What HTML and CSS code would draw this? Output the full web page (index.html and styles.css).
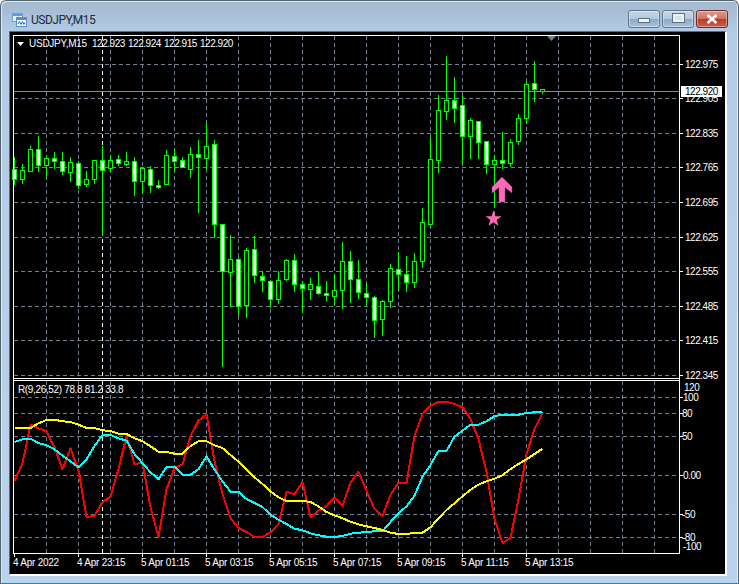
FILE: index.html
```html
<!DOCTYPE html>
<html lang="en">
<head>
    <meta charset="UTF-8">
    <meta name="viewport" content="width=device-width, initial-scale=1.0">
    <title>USDJPY,M15</title>
    <link rel="stylesheet" href="styles.css">
</head>
<body>

<div class="window">
    <div class="titlebar">
        <svg class="app-icon" width="15" height="14" viewBox="0 0 15 14">
            <rect x="0.5" y="0.5" width="10" height="8" fill="#e8f2fb" stroke="#6f9fd0"/>
            <rect x="1" y="1" width="9" height="2" fill="#5f9ad8"/>
            <rect x="4.5" y="4.5" width="10" height="9" fill="#f4f9fe" stroke="#5a8fc8"/>
            <rect x="5" y="5" width="9" height="2" fill="#4f8fd6"/>
            <path d="M6 11 L7.5 8.5 L9 11.5 L10.5 8.5 L12 11.5 L13 9.5" fill="none" stroke="#3a70b0"/>
        </svg>
        <span class="title">USDJPY,M15</span>
        <div class="controls">
            <div class="ctl"><span class="glyph-min"></span></div>
            <div class="ctl"><span class="glyph-max"></span></div>
            <div class="ctl ctl-close">
                <svg width="12" height="10" viewBox="0 0 12 10">
                    <path d="M1.5 1 L10.5 9 M10.5 1 L1.5 9" stroke="#fff" stroke-width="2.6" fill="none"/>
                </svg>
            </div>
        </div>
    </div>
    <div class="client">
        <svg id="chart" class="chart" width="715" height="542" viewBox="10 32 715 542"></svg>
    </div>
</div>

<script src="chart.js"></script>

</body>
</html>
```

FILE: styles.css
```css
body {
    margin: 0;
    background: #ffffff;
    overflow: hidden;
}

.window {
    box-sizing: border-box;
    width: 739px;
    height: 584px;
    display: flex;
    flex-direction: column;
    padding: 0 11px 7px 8px;
    border: 1px solid #56646f;
    border-bottom-color: #1f8aa0;
    border-radius: 6px 6px 0 0;
    background: linear-gradient(180deg, #a3b8cd 0%, #b4cde6 6%, #b9d3ec 100%);
    box-shadow: inset 1px 1px 0 #dfe8f0, inset -1px 0 0 #e4eef7;
}

.titlebar {
    height: 30px;
    flex: none;
    display: flex;
    align-items: center;
    font-family: "Roboto", "Liberation Sans", sans-serif;
}

.app-icon {
    margin: 7px 4px 0 3px;
}

.title {
    font-size: 12px;
    letter-spacing: -0.5px;
    color: #1c2a3a;
    margin-top: 7px;
}

.controls {
    margin-left: auto;
    margin-right: -1px;
    margin-top: 6px;
    display: flex;
    gap: 2px;
}

.ctl {
    box-sizing: border-box;
    width: 32px;
    height: 18px;
    display: flex;
    align-items: center;
    justify-content: center;
    border: 1px solid #5f7488;
    border-radius: 3px;
    background: linear-gradient(180deg, #c5d6e6 0%, #b4c9dd 48%, #8ba8c4 52%, #a9c3da 100%);
    box-shadow: inset 0 0 0 1px rgba(255, 255, 255, 0.4);
}

.ctl-close {
    border-color: #6a2a2a;
    background: linear-gradient(180deg, #dd9a8e 0%, #cf6f60 48%, #b83a28 52%, #c9604c 100%);
}

.glyph-min {
    width: 10px;
    height: 3px;
    margin-top: 3px;
    background: #eef3f8;
    border: 1px solid #5d7185;
}

.glyph-max {
    box-sizing: border-box;
    width: 11px;
    height: 8px;
    margin-bottom: 2px;
    background: #d7e2ec;
    border: 2px solid #eef3f8;
    outline: 1px solid #5d7185;
}

.client {
    flex: none;
    border-top: 1px solid #5b6a75;
    border-left: 1px solid #5b6a75;
    border-right: 2px solid #ffffff;
    border-bottom: 2px solid #ffffff;
    background: #000000;
    line-height: 0;
}

.chart {
    display: block;
    background: #000000;
    font-family: "Liberation Sans", "Arial", sans-serif;
    font-size: 10px;
}

.chart text {
    fill: #ffffff;
    letter-spacing: -0.25px;
    dominant-baseline: central;
}

.chart text.num {
    letter-spacing: -0.47px;
}

.chart text.indicator {
    letter-spacing: -0.35px;
}

.chart text.last-price {
    fill: #000000;
    letter-spacing: -0.47px;
}

.grid-line {
    stroke: #708090;
    stroke-width: 1;
    stroke-dasharray: 4 3;
    shape-rendering: crispEdges;
}

.separator {
    stroke: #ffffff;
    stroke-width: 1;
    stroke-dasharray: 4 3;
    shape-rendering: crispEdges;
}

.price-line {
    stroke: #808a96;
    stroke-width: 1;
    shape-rendering: crispEdges;
}

.frame {
    fill: #ffffff;
    shape-rendering: crispEdges;
}

.green {
    fill: #00ff00;
    shape-rendering: crispEdges;
}

.body-up {
    fill: #000000;
    shape-rendering: crispEdges;
}

.body-down {
    fill: #ffffff;
    shape-rendering: crispEdges;
}

.series {
    fill: none;
    stroke-width: 2;
    stroke-linejoin: round;
    shape-rendering: crispEdges;
}

.series-red { stroke: #ff0000; }
.series-cyan { stroke: #00ffff; }
.series-yellow { stroke: #ffff00; }

.marker {
    fill: #ff69b4;
}

.marker-edge {
    stroke: #7a58b8;
    stroke-width: 0.4;
}

.shift-mark {
    fill: #708090;
}

.label-box {
    fill: #ffffff;
    shape-rendering: crispEdges;
}
```

FILE: chart.js
```js
const svg = document.getElementById('chart');
const NS = 'http://www.w3.org/2000/svg';

function add(tag, attrs, text) {
    const el = document.createElementNS(NS, tag);
    for (const k in attrs) el.setAttribute(k, attrs[k]);
    if (text) el.textContent = text;
    svg.appendChild(el);
    return el;
}

function vline(x, y1, y2, cls) {
    add('line', { x1: x + 0.5, x2: x + 0.5, y1: y1, y2: y2, class: cls });
}

function hline(y, cls) {
    add('line', { x1: 14, x2: 679, y1: y + 0.5, y2: y + 0.5, class: cls });
}

// wick top, wick bottom, body top, body bottom, filled
const candles = [
    [157,184,169,179,1],[164,183,170,179,0],[146,171,149,171,0],[136,171,149,165,1],
    [155,177,158,165,0],[152,168,158,161,1],[152,174,161,171,1],[157,181,162,172,0],
    [161,188,163,185,1],[171,186,179,184,0],[160,183,160,179,0],[146,235,160,170,1],
    [155,170,160,168,0],[155,165,159,163,1],[152,165,161,164,0],[157,195,161,181,1],
    [167,193,168,181,0],[166,192,169,185,1],[180,188,185,187,1],[150,184,155,184,0],
    [149,171,156,161,1],[157,167,160,167,1],[147,177,154,169,0],[140,212,154,157,1],
    [123,168,146,158,0],[140,237,144,224,1],[224,366,224,271,1],[235,306,259,272,0],
    [257,315,259,306,1],[248,317,250,305,0],[236,282,249,275,1],[271,291,276,280,1],
    [280,307,281,299,1],[271,303,280,299,0],[259,280,260,279,0],[254,291,260,284,1],
    [281,312,284,288,1],[278,299,284,289,0],[272,294,286,293,1],[281,300,293,295,1],
    [274,304,290,296,0],[242,308,261,290,0],[251,302,261,279,1],[260,298,279,292,1],
    [283,304,293,297,1],[296,337,297,320,1],[300,335,301,319,0],[264,307,268,301,0],
    [252,288,269,274,1],[256,291,274,282,1],[253,287,261,282,0],[208,267,222,261,0],
    [137,224,159,224,0],[95,172,110,160,0],[56,119,100,111,0],[77,122,100,108,1],
    [95,163,105,136,1],[118,158,120,136,0],[121,158,121,142,1],[141,173,141,164,1],
    [155,207,160,164,0],[132,168,160,163,1],[139,166,142,163,0],[114,144,118,141,0],
    [82,123,84,118,0],[61,101,83,89,1],[89,93,89,91,0]
];

// indicator values, in the same column order as the candles
const red = [290,238,122,133,142,190,256,193,260,399,396,354,338,255,157,241,235,370,459,315,252,241,156,110,91,232,330,403,432,444,459,459,445,420,323,331,293,400,380,366,341,366,296,263,320,375,396,332,296,296,156,90,65,54,53,60,70,105,165,265,405,477,462,345,210,135,88];
const cyan = [174,166,164,177,184,196,215,232,250,226,186,153,153,163,170,210,238,265,286,249,248,272,272,256,217,257,292,323,323,345,357,369,392,407,420,434,439,448,454,458,459,456,449,446,444,442,442,414,388,367,335,278,243,201,201,158,140,122,122,112,96,93,92,92,87,85,84];
const yellow = [132,132,132,118,108,107,112,114,122,132,132,139,141,149,150,163,172,187,203,204,209,209,186,172,172,184,192,213,233,257,280,300,322,340,351,351,351,354,367,384,394,403,413,421,427,432,438,446,450,450,447,446,430,403,378,358,337,317,302,292,284,274,255,240,226,210,194];

// grid
for (let x = 46; x <= 654; x += 32) {
    vline(x, 36, 378, 'grid-line');
    vline(x, 381, 553, 'grid-line');
}
vline(102, 36, 378, 'separator');
vline(102, 381, 553, 'separator');

const mainLevels = [[64,'122.975'],[98,'122.905'],[133,'122.835'],[167,'122.765'],[202,'122.695'],[237,'122.625'],[271,'122.555'],[306,'122.485'],[340,'122.415'],[375,'122.345']];
const subLevels = [[397,'100',683],[413,'80',682],[436,'50',682],[475,'0.00',683],[514,'-50',682],[537,'-80',682]];

mainLevels.forEach(l => hline(l[0], 'grid-line'));
subLevels.forEach(l => hline(l[0], 'grid-line'));
hline(91, 'price-line');

// frame
add('rect', { x: 13, y: 35, width: 667, height: 1, class: 'frame' });
add('rect', { x: 13, y: 378, width: 667, height: 1, class: 'frame' });
add('rect', { x: 13, y: 380, width: 667, height: 1, class: 'frame' });
add('rect', { x: 13, y: 553, width: 667, height: 1, class: 'frame' });
add('rect', { x: 13, y: 35, width: 1, height: 519, class: 'frame' });
add('rect', { x: 679, y: 35, width: 1, height: 519, class: 'frame' });

// candles
candles.forEach((c, i) => {
    const x = 14 + 8 * i;
    add('rect', { x: x, y: c[0], width: 1, height: c[1] - c[0] + 1, class: 'green' });
    add('rect', { x: x - 2, y: c[2], width: 5, height: c[3] - c[2] + 1, class: 'green' });
    if (c[3] - c[2] > 1) {
        add('rect', { x: x - 1, y: c[2] + 1, width: 3, height: c[3] - c[2] - 1, class: c[4] ? 'body-down' : 'body-up' });
    }
});

// indicator lines
function series(values, cls) {
    const pts = values.map((v, i) => (14.5 + 8 * i) + ',' + (384 + v / 3).toFixed(1));
    add('polyline', { points: pts.join(' '), class: 'series ' + cls });
}
series(red, 'series-red');
series(cyan, 'series-cyan');
series(yellow, 'series-yellow');

// markers
add('polygon', { points: '502,177 512,187 512,193 505,187.5 505,202 499,202 499,187.5 492,193 492,187', class: 'marker marker-edge' });
add('polygon', { points: '493.5,210.5 495.5,216.3 501.5,216.3 496.7,219.9 498.5,226 493.5,222.3 488.5,226 490.3,219.9 485.5,216.3 491.5,216.3', class: 'marker' });
add('polygon', { points: '547,36 556,36 551.5,41', class: 'shift-mark' });

// header
add('polygon', { points: '17,42 24,42 20.5,46', fill: '#ffffff' });
add('text', { x: 29, y: 43.5 }, 'USDJPY,M15');
[[92,'122.923'],[128,'122.924'],[164,'122.915'],[200,'122.920']].forEach(t => add('text', { x: t[0], y: 43.5, class: 'num' }, t[1]));
add('text', { x: 18, y: 389.5, class: 'indicator' }, 'R(9,26,52) 78.8 81.2 33.8');

// right axis
mainLevels.forEach(l => {
    add('rect', { x: 680, y: l[0], width: 3, height: 1, class: 'frame' });
    add('text', { x: 685, y: l[0] + 0.5, class: 'num' }, l[1]);
});
subLevels.forEach(l => {
    add('rect', { x: 680, y: l[0], width: 3, height: 1, class: 'frame' });
    add('text', { x: l[2], y: l[0] + 0.5, class: 'num' }, l[1]);
});
add('text', { x: 684, y: 387.5, class: 'num' }, '120');
add('text', { x: 683, y: 546.5, class: 'num' }, '-100');
add('rect', { x: 681, y: 86, width: 41, height: 11, class: 'label-box' });
add('text', { x: 685, y: 91.5, class: 'last-price' }, '122.920');

// time axis
['4 Apr 2022','4 Apr 23:15','5 Apr 01:15','5 Apr 03:15','5 Apr 05:15','5 Apr 07:15','5 Apr 09:15','5 Apr 11:15','5 Apr 13:15'].forEach((t, i) => {
    const x = 14 + 64 * i;
    add('rect', { x: x, y: 554, width: 1, height: 3, class: 'frame' });
    add('text', { x: x - 1, y: 562.5 }, t);
});
```
